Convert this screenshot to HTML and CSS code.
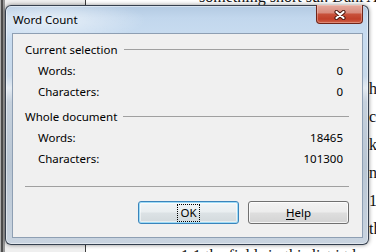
FILE: index.html
```html
<!DOCTYPE html>
<html>
<head>
  <meta charset="UTF-8">
  <title>Word Count</title>
  <link rel="stylesheet" href="styles.css">
</head>
<body>
  <div class="desk">
    <div class="desk-edge"></div>
    <div class="desk-margin"></div>
    <div class="sheet">
      <div class="sheet-top">something short sur. Dani A</div>
      <div class="sheet-col">
        <div>hi</div>
        <div>ca</div>
        <div>ke</div>
        <div>n1</div>
        <div>1.</div>
        <div>th</div>
      </div>
      <div class="sheet-bottom">1.1 the fields in this list i t l</div>
    </div>
  </div>

  <div class="dialog">
    <div class="title-bar">
      <span class="title">Word Count</span>
      <span class="close">
        <svg width="12" height="10" viewBox="0 0 12 10">
          <path d="M2.5 2 L9.5 8 M9.5 2 L2.5 8" stroke="#4b1810" stroke-width="4.2" stroke-linecap="round" fill="none"/>
          <path d="M2.5 2 L9.5 8 M9.5 2 L2.5 8" stroke="#fff" stroke-width="2.2" stroke-linecap="round" fill="none"/>
        </svg>
      </span>
    </div>
    <div class="client">
      <div class="group">
        <div class="group-head"><span>Current selection</span><i class="rule"></i></div>
        <div class="row"><span>Words:</span><span>0</span></div>
        <div class="row"><span>Characters:</span><span>0</span></div>
      </div>
      <div class="group second">
        <div class="group-head"><span>Whole document</span><i class="rule"></i></div>
        <div class="row"><span>Words:</span><span>18465</span></div>
        <div class="row"><span>Characters:</span><span>101300</span></div>
      </div>
      <div class="sep"></div>
      <div class="buttons">
        <button class="btn default"><span class="focus">OK</span></button>
        <button class="btn"><u>H</u>elp</button>
      </div>
    </div>
  </div>
</body>
</html>
```

FILE: styles.css
```css
* { box-sizing: border-box; }
body {
  margin: 0;
  width: 376px;
  height: 252px;
  overflow: hidden;
  position: relative;
  font-family: "Noto Sans", "DejaVu Sans", sans-serif;
  font-size: 11.5px;
  color: #000;
  background: #fff;
}

/* document behind the dialog */
.desk { display: flex; height: 252px; }
.desk-edge {
  width: 5px;
  background: linear-gradient(90deg, #b0b0b0 0, #b0b0b0 1px, #4e4e4e 1px, #4e4e4e 3px, #9a9a9a 3px);
}
.desk-margin { width: 81px; background: #efefef; border-right: 1px solid #3e3e3e; }
.sheet {
  flex: 1;
  background: #fff;
  font-family: "Liberation Serif", serif;
  font-size: 16px;
  color: #111;
  white-space: nowrap;
  overflow: hidden;
}
.sheet-top { margin-top: -13px; line-height: 20px; padding-left: 113px; }
.sheet-col { margin-top: 68px; padding-left: 283px; line-height: 28px; }
.sheet-bottom { margin-top: -1px; padding-left: 95px; line-height: 28px; }

/* dialog window */
.dialog {
  position: absolute;
  left: 5px;
  top: 5px;
  width: 364px;
  height: 240px;
  display: flex;
  flex-direction: column;
  padding: 0 5px 6px 6px;
  border: 1px solid rgba(28, 38, 52, 0.85);
  border-radius: 6px;
  box-shadow: 0 0 4px rgba(0, 0, 0, 0.45), inset 0 0 0 1px rgba(255, 255, 255, 0.45);
  background:
    radial-gradient(95px 22px at 45px 14px, rgba(255, 255, 255, 0.6), rgba(255, 255, 255, 0)),
    linear-gradient(180deg, #b3cae2 0, #c2d7ed 12px, #c8dcf0 30px, #c8d9ea 70px, #e4ebf2 82px, #c6d1dd 96px, #b9c6d4 160px, #c9d4e0 100%);
}
.title-bar {
  height: 27px;
  display: flex;
  justify-content: space-between;
  align-items: flex-start;
}
.title { line-height: 27px; padding-left: 1px; color: #000; }
.close {
  width: 47px;
  height: 19px;
  margin-top: -1px;
  display: flex;
  align-items: center;
  justify-content: center;
  border: 1px solid #6f2519;
  border-top: none;
  border-radius: 0 0 4px 4px;
  box-shadow: inset 0 0 0 1px rgba(255, 220, 210, 0.35);
  background: linear-gradient(180deg, #e4aa9e 0, #d98c7e 42%, #c8503a 52%, #c13f29 78%, #d06249 100%);
}
.close svg { display: block; margin-top: 1px; }

.client {
  flex: 1;
  border: 1px solid #8e9fb3;
  background: #f0f0f0;
  padding: 5px 0 0 12px;
}
.group { display: flex; flex-direction: column; }
.group.second { margin-top: 4px; }
.group-head {
  display: flex;
  align-items: center;
  height: 21px;
  padding-right: 13px;
}
.rule { flex: 1; height: 1px; background: #a0a0a0; margin-left: 6px; }
.row {
  display: flex;
  justify-content: space-between;
  align-items: center;
  height: 21px;
  padding: 0 19px 0 13px;
}
.sep { height: 1px; background: #a0a0a0; margin: 17px 13px 0 0; }

.buttons {
  display: flex;
  justify-content: flex-end;
  gap: 9px;
  margin-top: 14px;
  padding-right: 13px;
}
.btn {
  width: 101px;
  height: 23px;
  padding: 0;
  font: inherit;
  color: #000;
  border: 1px solid #707070;
  border-radius: 3px;
  box-shadow: inset 0 0 0 1px rgba(255, 255, 255, 0.75);
  background: linear-gradient(180deg, #f3f3f3 0, #ececec 48%, #dedede 52%, #d3d3d3 100%);
  display: flex;
  align-items: center;
  justify-content: center;
}
.btn.default {
  border-color: #3a84bb;
  box-shadow: inset 0 0 0 1px #9edbf6, inset 0 0 0 2px rgba(255, 255, 255, 0.5);
  background: linear-gradient(180deg, #f1f5f7 0, #e9eef0 48%, #dce2e5 52%, #d2d9dc 100%);
}
.focus {
  outline: 1px dotted #000;
  padding: 0 2px;
  line-height: 16px;
}
.btn u { text-decoration: underline; text-underline-offset: 2px; }
```
